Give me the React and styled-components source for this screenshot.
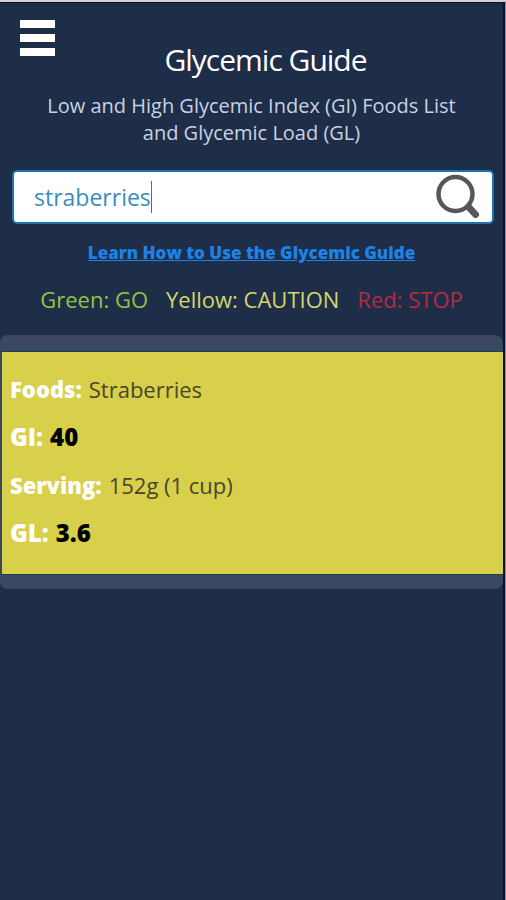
import { useState } from "react"
import styled, { createGlobalStyle } from "styled-components"

const GlobalStyle=createGlobalStyle`
    *{
        box-sizing:border-box;
    }
    body{
        margin:0;
        background-color:#1e2e49;
        font-family:"Open Sans","Noto Sans",sans-serif;
    }
`
const Container=styled.div`
    min-height:100vh;
    background-color:#1e2e49;
    border-top:2px solid #d3d0d8;
    border-right:1px solid #8d90b4;
`
const Screen=styled.main`
    min-height:calc(100vh - 2px);
    border-top:1px solid #0a1022;
    border-right:2px solid #0b1230;
`
const Header=styled.header`
    padding:17px 12px 0;
    text-align:center;
`
const MenuButton=styled.button`
    display:flex;
    flex-direction:column;
    gap:6px;
    margin-left:8px;
    padding:0;
    border:none;
    background:none;
    cursor:pointer;
`
const Bar=styled.span`
    width:35px;
    height:8px;
    background-color:white;
`
const Title=styled.h1`
    margin:-17px 0 0;
    padding-left:28px;
    font-size:30px;
    line-height:42px;
    font-weight:400;
    letter-spacing:-1px;
    color:white;
`
const Desc=styled.p`
    max-width:420px;
    margin:11px auto 0;
    font-size:20px;
    line-height:27px;
    color:#c9d2e2;
`
const SearchForm=styled.form`
    position:relative;
    display:flex;
    align-items:center;
    margin:24px 9px 0 12px;
    height:54px;
    border:2px solid #1d72b5;
    border-radius:5px;
    background-color:white;
`
const Input=styled.input`
    flex:1;
    min-width:0;
    height:100%;
    padding:0 20px;
    border:none;
    outline:none;
    background:none;
    font-family:inherit;
    font-size:23px;
    color:#3b8cc0;
`
const Caret=styled.span`
    position:absolute;
    left:137px;
    top:9px;
    width:1px;
    height:32px;
    background-color:#4d6f8c;
`
const SearchButton=styled.button`
    display:flex;
    padding:0;
    margin-right:10px;
    border:none;
    background:none;
    cursor:pointer;
`
const GuideLink=styled.a`
    display:block;
    width:fit-content;
    margin:16px auto 0;
    font-size:17px;
    line-height:26px;
    font-weight:800;
    color:#1c82e6;
`
const Legend=styled.div`
    display:flex;
    justify-content:center;
    gap:18px;
    margin-top:17px;
    font-size:22px;
    line-height:32px;
`
const LegendItem=styled.span`
    color:${(props) => props.$color};
`
const Results=styled.section`
    margin-top:20px;
    padding:16px 0 14px 2px;
    border-radius:8px;
    background-color:#3a4961;
`
const Card=styled.dl`
    display:flex;
    flex-direction:column;
    gap:16px;
    margin:0;
    padding:21px 8px 25px;
    border:1px solid #17414e;
    border-width:1px 0;
    background-color:#d8cf4b;
`
const Row=styled.div`
    display:flex;
    gap:7px;
    font-size:${(props) => (props.$strong ? "24px" : "22px")};
    line-height:32px;
`
const Label=styled.dt`
    font-weight:800;
    color:white;
`
const Value=styled.dd`
    margin:0;
    font-weight:${(props) => (props.$strong ? 800 : 400)};
    color:${(props) => (props.$strong ? "black" : "#4b452b")};
`

const legend = [
    { text: "Green: GO", color: "#8fc53f" },
    { text: "Yellow: CAUTION", color: "#d5d56a" },
    { text: "Red: STOP", color: "#b52b3f" },
]

const food = [
    { label: "Foods:", value: "Straberries" },
    { label: "GI:", value: "40", strong: true },
    { label: "Serving:", value: "152g (1 cup)" },
    { label: "GL:", value: "3.6", strong: true },
]

const App = () => {
    const [query, setQuery] = useState("straberries")

    return (
        <Container>
            <GlobalStyle/>
            <Screen>
                <Header>
                    <MenuButton type="button" aria-label="Menu">
                        <Bar/>
                        <Bar/>
                        <Bar/>
                    </MenuButton>
                    <Title>Glycemic Guide</Title>
                    <Desc>Low and High Glycemic Index (GI) Foods List and Glycemic Load (GL)</Desc>
                </Header>
                <SearchForm onSubmit={(e) => e.preventDefault()}>
                    <Input
                        type="text"
                        aria-label="Search foods"
                        value={query}
                        onChange={(e) => setQuery(e.target.value)}
                    />
                    {query === "straberries" && <Caret/>}
                    <SearchButton type="submit" aria-label="Search">
                        <svg width="46" height="46" viewBox="0 0 46 46" fill="none" stroke="#575757">
                            <circle cx="19.5" cy="20" r="17" strokeWidth="4.5"/>
                            <path d="M31 31l3 3" strokeWidth="5"/>
                            <path d="M33.5 34l6 6.5" strokeWidth="7" strokeLinecap="round"/>
                        </svg>
                    </SearchButton>
                </SearchForm>
                <GuideLink href="#guide">Learn How to Use the Glycemic Guide</GuideLink>
                <Legend>
                    {legend.map((item) => (
                        <LegendItem key={item.text} $color={item.color}>{item.text}</LegendItem>
                    ))}
                </Legend>
                <Results>
                    <Card>
                        {food.map((item) => (
                            <Row key={item.label} $strong={item.strong}>
                                <Label>{item.label}</Label>
                                <Value $strong={item.strong}>{item.value}</Value>
                            </Row>
                        ))}
                    </Card>
                </Results>
            </Screen>
        </Container>
    )
}

export default App
